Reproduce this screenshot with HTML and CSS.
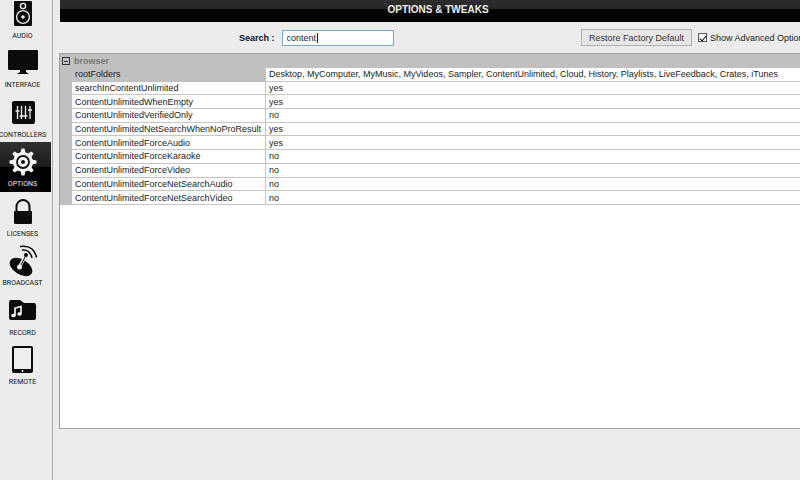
FILE: index.html
```html
<!DOCTYPE html>
<html lang="en">
<head>
  <meta charset="UTF-8" />
  <meta name="viewport" content="width=device-width, initial-scale=1.0"/>
  <title>Options &amp; Tweaks</title>
  <link rel="stylesheet" href="styles.css">
</head>
<body>
<div class="window">
  <!-- Left menu -->
  <nav class="sidebar">
    <a href="#audio" class="item">
      <svg viewBox="0 0 32 32"><rect x="7" y="3" width="18" height="25" rx="1"/><g fill="none" stroke="#eee" stroke-width="1.4"><circle cx="16" cy="8" r="2.6"/><circle cx="16" cy="19" r="6.4"/></g><circle cx="16" cy="19" r="1.8" fill="#eee"/></svg>
      <span>AUDIO</span>
    </a>
    <a href="#interface" class="item">
      <svg viewBox="0 0 32 32"><rect x="1" y="3" width="30" height="20" rx="1"/><path d="M13 23h6v2l3 2H10l3-2z"/></svg>
      <span>INTERFACE</span>
    </a>
    <a href="#controllers" class="item">
      <svg viewBox="0 0 32 32"><rect x="5" y="4" width="23" height="23" rx="2"/><path d="M10.500 9v13M14.500 9v13M18.500 9v13M23 9v13M8.500 14h4M12.500 19h4M16.500 19h4M21 13h4" fill="none" stroke="#eee" stroke-width="1.3"/></svg>
      <span>CONTROLLERS</span>
    </a>
    <a href="#options" class="item active">
      <svg viewBox="0 0 32 32"><g fill="#f4f4f4"><g id="teeth"><path id="tooth" d="M13.500 7l1-4.500h3l1 4.500v18l-1 4.500h-3l-1-4.500z"/><use href="#tooth" transform="rotate(45 16 16)"/></g><use href="#teeth" transform="rotate(90 16 16)"/><circle cx="16" cy="16" r="10"/></g><circle cx="16" cy="16" r="6" fill="none" stroke="#111" stroke-width="1.800"/><circle cx="16" cy="16" r="2" fill="#111"/></svg>
      <span>OPTIONS</span>
    </a>
    <a href="#licenses" class="item">
      <svg viewBox="0 0 32 32"><path d="M9.500 16V10.500a6.500 6.500 0 0 1 13 0v6" fill="none" stroke="#0c0c0c" stroke-width="2"/><rect x="7" y="15" width="18" height="13" rx="1"/></svg>
      <span>LICENSES</span>
    </a>
    <a href="#broadcast" class="item">
      <svg viewBox="0 0 32 32"><ellipse cx="14" cy="22" rx="12.500" ry="7.500" transform="rotate(32 14 22)"/><path d="M12 22.500L18.500 11" stroke="#eee" stroke-width="3.200"/><path d="M14 20L18.500 11" stroke="#0c0c0c" stroke-width="1"/><circle cx="12.500" cy="22" r="2.500" fill="#eee"/><circle cx="19" cy="10" r="2"/><path d="M15 5q8-1 10 8M13 1.500q14-2 16.500 11" fill="none" stroke="#0c0c0c" stroke-width="1.500"/></svg>
      <span>BROADCAST</span>
    </a>
    <a href="#record" class="item">
      <svg viewBox="0 0 32 32"><path d="M2 8q0-3 2-3h9l4 3h10q2 0 2 2v13q0 2-2 2H4q-2 0-2-2z"/><path d="M8 20v-7l6-1.500v7" fill="none" stroke="#fff" stroke-width="1.600"/><ellipse cx="6.500" cy="20.500" rx="2.200" ry="1.700" fill="#fff"/><ellipse cx="12.500" cy="19" rx="2.200" ry="1.700" fill="#fff"/></svg>
      <span>RECORD</span>
    </a>
    <a href="#remote" class="item">
      <svg viewBox="0 0 32 32"><rect x="5" y="2" width="21" height="27" rx="2"/><rect x="7" y="4" width="17" height="21" fill="#eee"/><circle cx="15.500" cy="27" r="1" fill="#eee"/></svg>
      <span>REMOTE</span>
    </a>
  </nav>

  <main class="content">
    <h1>OPTIONS &amp; TWEAKS</h1>

    <div class="toolbar">
      <label class="search-label" for="search">Search :</label>
      <input type="text" class="search" id="search" value="content" autocomplete="off">
      <button type="button" class="restore">Restore Factory Default</button>
      <label class="advanced"><input type="checkbox" checked>Show Advanced Options</label>
    </div>

    <div class="panel">
      <table>
        <colgroup>
          <col class="col-gutter">
          <col class="col-name">
          <col>
        </colgroup>
        <thead>
          <tr>
            <th class="gutter"><button type="button" class="toggle" aria-label="Collapse browser"></button></th>
            <th class="group" colspan="2">browser</th>
          </tr>
        </thead>
        <tbody>
          <tr class="selected"><td class="gutter"></td><td class="name">rootFolders</td><td>Desktop, MyComputer, MyMusic, MyVideos, Sampler, ContentUnlimited, Cloud, History, Playlists, LiveFeedback, Crates, iTunes</td></tr>
          <tr><td class="gutter"></td><td class="name">searchInContentUnlimited</td><td>yes</td></tr>
          <tr><td class="gutter"></td><td class="name">ContentUnlimitedWhenEmpty</td><td>yes</td></tr>
          <tr><td class="gutter"></td><td class="name">ContentUnlimitedVerifiedOnly</td><td>no</td></tr>
          <tr><td class="gutter"></td><td class="name">ContentUnlimitedNetSearchWhenNoProResult</td><td>yes</td></tr>
          <tr><td class="gutter"></td><td class="name">ContentUnlimitedForceAudio</td><td>yes</td></tr>
          <tr><td class="gutter"></td><td class="name">ContentUnlimitedForceKaraoke</td><td>no</td></tr>
          <tr><td class="gutter"></td><td class="name">ContentUnlimitedForceVideo</td><td>no</td></tr>
          <tr><td class="gutter"></td><td class="name">ContentUnlimitedForceNetSearchAudio</td><td>no</td></tr>
          <tr><td class="gutter"></td><td class="name">ContentUnlimitedForceNetSearchVideo</td><td>no</td></tr>
        </tbody>
      </table>
    </div>
  </main>
</div>
</body>
</html>
```
FILE: styles.css
```css
* {
  margin: 0;
  padding: 0;
  box-sizing: border-box;
}

body {
  font-family: "Liberation Sans", Arial, sans-serif;
  font-size: 9px;
  color: #222;
  background: #ececec;
  overflow: hidden;
}

.window {
  display: flex;
  min-height: 100vh;
}

/* left menu, slightly cut by the window edge */
.sidebar {
  flex: none;
  display: flex;
  flex-direction: column;
  width: 59px;
  margin: -6px 0 0 -6px;
  padding-right: 1px;
  border-right: 1px solid #aaa;
}

.item {
  display: flex;
  flex-direction: column;
  align-items: center;
  gap: 1px;
  height: 49px;
  padding-top: 4px;
  font-family: Roboto, sans-serif;
  font-size: 7px;
  line-height: 10px;
  color: #111;
  text-decoration: none;
}

.item:nth-child(even) {
  height: 50px;
}

.item svg {
  width: 32px;
  height: 32px;
  fill: #0c0c0c;
}

.item.active {
  color: #eee;
  background: linear-gradient(#303030, #1c1c1c 50%, #000 51%, #000);
}

/* the content runs past the right edge of the window */
.content {
  flex: 1;
  min-width: 0;
  display: flex;
  flex-direction: column;
  margin: 0 -16px 0 6px;
}

h1 {
  height: 22px;
  margin-left: 1px;
  font-size: 10px;
  line-height: 19px;
  text-align: center;
  color: #eee;
  background: linear-gradient(#2d2d2d, #262626 40%, #060606 41%, #000);
}

.toolbar {
  display: flex;
  align-items: center;
  height: 31px;
  padding-left: 180px;
  white-space: nowrap;
}

.search-label {
  font-weight: bold;
  color: #111;
}

/* the thin line is the caret after the text */
.search {
  width: 112px;
  height: 16px;
  margin-left: 7px;
  padding: 0 4px;
  font: inherit;
  color: #222;
  background: linear-gradient(#222, #222) 34px 2px / 1px 10px no-repeat #fff;
  border: 1px solid #7aa7c7;
  outline: none;
}

.restore {
  width: 111px;
  height: 17px;
  margin-left: auto;
  font: inherit;
  color: #333;
  background: #e6e6e6;
  border: 1px solid #b0b0b0;
}

.advanced {
  display: flex;
  align-items: center;
  gap: 3px;
  width: 118px;
  margin-left: 6px;
}

.advanced input {
  appearance: none;
  width: 9px;
  height: 9px;
  display: grid;
  place-items: center;
  background: #fff;
  border: 1px solid #555;
}

.advanced input:checked::before {
  content: '';
  width: 3px;
  height: 6px;
  border: solid #111;
  border-width: 0 1px 1px 0;
  transform: rotate(40deg);
}

.panel {
  flex: 1;
  margin-bottom: 51px;
  background: #fff;
  border: 1px solid #a0a0a0;
}

table {
  width: 100%;
  height: 151px;
  border-collapse: separate;
  border-spacing: 0;
  table-layout: fixed;
}

.col-gutter {
  width: 12px;
}

.col-name {
  width: 194px;
}

td,
th {
  padding: 0 3px;
  line-height: 12px;
  text-align: left;
  white-space: nowrap;
}

td {
  border-bottom: 1px solid #c6c6c6;
}

th {
  padding: 0 2px;
  line-height: 14px;
}

th,
td.gutter,
.selected .name {
  background: #c0c0c0;
  border-color: #c0c0c0;
}

.group {
  color: #777;
}

.name {
  border-right: 1px solid #c6c6c6;
}

.toggle {
  display: grid;
  place-items: center;
  width: 8px;
  height: 8px;
  background: transparent;
  border: 1px solid #333;
}

.toggle::before {
  content: '';
  width: 4px;
  height: 1px;
  background: #333;
}
```
